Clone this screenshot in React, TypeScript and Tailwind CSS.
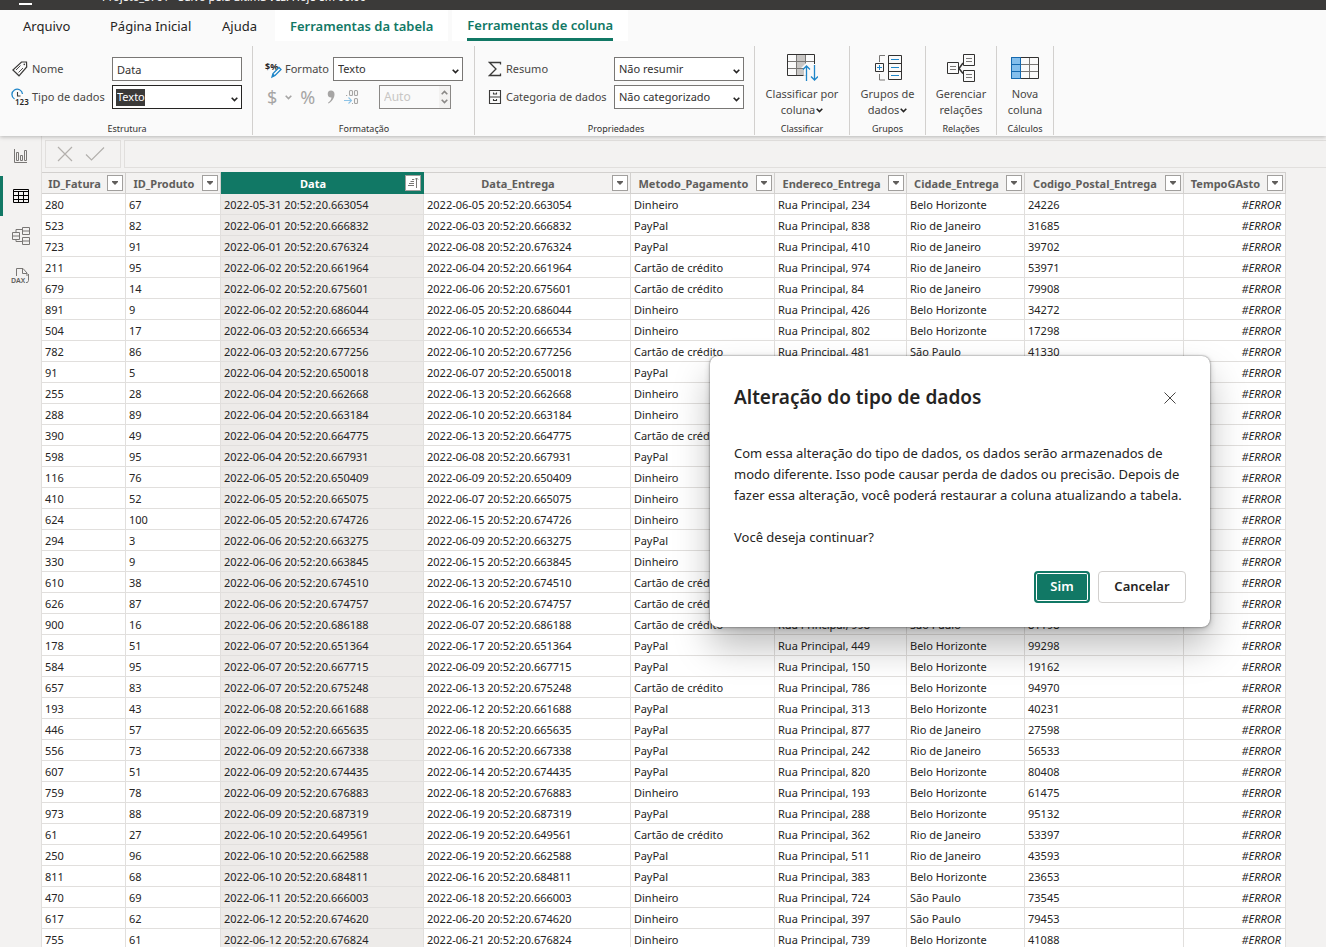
import { useState } from 'react';
import type { ReactNode } from 'react';

type Row = string[];

const columns = [
  { name: 'ID_Fatura', width: 'w-[84px]' },
  { name: 'ID_Produto', width: 'w-[95px]' },
  { name: 'Data', width: 'w-[203px]' },
  { name: 'Data_Entrega', width: 'w-[207px]' },
  { name: 'Metodo_Pagamento', width: 'w-[144px]' },
  { name: 'Endereco_Entrega', width: 'w-[132px]' },
  { name: 'Cidade_Entrega', width: 'w-[118px]' },
  { name: 'Codigo_Postal_Entrega', width: 'w-[159px]' },
  { name: 'TempoGAsto', width: 'w-[102px]' },
];

const BH = 'Belo Horizonte';
const RJ = 'Rio de Janeiro';
const SP = 'São Paulo';
const CC = 'Cartão de crédito';

// id, product, order day, delivery day, time fraction, payment, street number, city, zip
const rows: Row[] = [
  ['280', '67', '05-31', '06-05', '663054', 'Dinheiro', '234', BH, '24226'],
  ['523', '82', '06-01', '06-03', '666832', 'PayPal', '838', RJ, '31685'],
  ['723', '91', '06-01', '06-08', '676324', 'PayPal', '410', RJ, '39702'],
  ['211', '95', '06-02', '06-04', '661964', CC, '974', RJ, '53971'],
  ['679', '14', '06-02', '06-06', '675601', CC, '84', RJ, '79908'],
  ['891', '9', '06-02', '06-05', '686044', 'Dinheiro', '426', BH, '34272'],
  ['504', '17', '06-03', '06-10', '666534', 'Dinheiro', '802', BH, '17298'],
  ['782', '86', '06-03', '06-10', '677256', CC, '481', SP, '41330'],
  ['91', '5', '06-04', '06-07', '650018', 'PayPal'],
  ['255', '28', '06-04', '06-13', '662668', 'Dinheiro'],
  ['288', '89', '06-04', '06-10', '663184', 'Dinheiro'],
  ['390', '49', '06-04', '06-13', '664775', CC],
  ['598', '95', '06-04', '06-08', '667931', 'PayPal'],
  ['116', '76', '06-05', '06-09', '650409', 'Dinheiro'],
  ['410', '52', '06-05', '06-07', '665075', 'Dinheiro'],
  ['624', '100', '06-05', '06-15', '674726', 'Dinheiro'],
  ['294', '3', '06-06', '06-09', '663275', 'PayPal'],
  ['330', '9', '06-06', '06-15', '663845', 'Dinheiro'],
  ['610', '38', '06-06', '06-13', '674510', CC],
  ['626', '87', '06-06', '06-16', '674757', CC],
  ['900', '16', '06-06', '06-07', '686188', CC, '998', SP, '81198'],
  ['178', '51', '06-07', '06-17', '651364', 'PayPal', '449', BH, '99298'],
  ['584', '95', '06-07', '06-09', '667715', 'PayPal', '150', BH, '19162'],
  ['657', '83', '06-07', '06-13', '675248', CC, '786', BH, '94970'],
  ['193', '43', '06-08', '06-12', '661688', 'PayPal', '313', BH, '40231'],
  ['446', '57', '06-09', '06-18', '665635', 'PayPal', '877', RJ, '27598'],
  ['556', '73', '06-09', '06-16', '667338', 'PayPal', '242', RJ, '56533'],
  ['607', '51', '06-09', '06-14', '674435', 'PayPal', '820', BH, '80408'],
  ['759', '78', '06-09', '06-18', '676883', 'Dinheiro', '193', BH, '61475'],
  ['973', '88', '06-09', '06-19', '687319', 'PayPal', '288', BH, '95132'],
  ['61', '27', '06-10', '06-19', '649561', CC, '362', RJ, '53397'],
  ['250', '96', '06-10', '06-19', '662588', 'PayPal', '511', RJ, '43593'],
  ['811', '68', '06-10', '06-16', '684811', 'PayPal', '383', BH, '23653'],
  ['470', '69', '06-11', '06-18', '666003', 'Dinheiro', '724', SP, '73545'],
  ['617', '62', '06-12', '06-20', '674620', 'Dinheiro', '397', SP, '79453'],
  ['755', '61', '06-12', '06-21', '676824', 'Dinheiro', '739', BH, '41088'],
];

const toCells = ([id, product, day, delivery, fraction, payment, street, city, zip]: Row) => [
  id,
  product,
  `2022-${day} 20:52:20.${fraction}`,
  `2022-${delivery} 20:52:20.${fraction}`,
  payment,
  street ? `Rua Principal, ${street}` : '',
  city,
  zip,
];

/* ---------- Icons ---------- */

const Chevron = ({ className = '' }: { className?: string }) => (
  <svg className={className} width="7" height="5" viewBox="0 0 7 5" fill="none" stroke="currentColor" strokeWidth="1.6">
    <path d="M.7.8 3.5 3.6 6.3.8" />
  </svg>
);

const TagIcon = () => (
  <svg width="16" height="16" viewBox="0 0 16 16" fill="none" stroke="#3b3a39" strokeWidth="1.2">
    <path d="M9.5 1H14.5l.2 5L7 14.8.9 9Z" />
    <path d="m4 9 4.500-4.500M6.500 11.500 11 7" strokeWidth=".9" />
    <circle cx="12.3" cy="3.4" r=".8" fill="#3b3a39" stroke="none" />
  </svg>
);

const DataTypeIcon = () => (
  <svg width="16" height="17" viewBox="0 0 16 17" fill="none" className="overflow-visible">
    <path d="M2.500 10A5.300 5.300 0 1 1 10.500 5" stroke="#1f86c9" strokeWidth="1.3" />
    <path d="M5.500 3v4h3" stroke="#3b3a39" strokeWidth="1.1" />
    <text x="3" y="16" fontSize="8" fontWeight="600" fill="#252423">123</text>
  </svg>
);

const FormatIcon = () => (
  <svg width="16" height="17" viewBox="0 0 16 17" fill="none" className="overflow-visible">
    <text x="0" y="9" fontSize="9" fontWeight="700" fill="#252423">$%</text>
    <path d="m7 16 1-3.500 6-6 2 2-6 6Z" fill="#fff" stroke="#1f86c9" strokeWidth="1.3" />
    <path d="m7 16 1-3.500 2.300 2Z" fill="#1f86c9" />
  </svg>
);

const SigmaIcon = () => (
  <svg width="14" height="16" viewBox="0 0 14 16" fill="none" stroke="#3b3a39" strokeWidth="1.3">
    <path d="M12.500 3.500V1.500H1.500L8 8l-6.500 6.500h11v-2" />
  </svg>
);

const CabinetIcon = () => (
  <svg width="14" height="16" viewBox="0 0 14 16" fill="none" stroke="#3b3a39" strokeWidth="1.1">
    <path d="M1.500 1.500h11v13h-11zM1.500 8h11" />
    <path d="M5.500 3.500V5h3V3.500M5.500 10v1.500h3V10" />
  </svg>
);

const DecimalIcon = () => (
  <svg width="17" height="17" viewBox="0 0 17 17" fill="none" stroke="#a6a5a4" strokeWidth="1.1">
    <rect x="6.500" y="1.500" width="3" height="5" rx="1" />
    <rect x="11.500" y="1.500" width="3" height="5" rx="1" />
    <rect x="11.500" y="9.500" width="3" height="5" rx="1" />
    <path d="M3 6.500h1.200M9 14.500h1" />
    <path d="M1 11.500h7M5.500 8.500l3 3-3 3" stroke="#8dc3e6" />
  </svg>
);

const SortColumnIcon = () => (
  <svg width="32" height="30" viewBox="0 0 32 30" fill="none">
    <path d="M11 1.500h9v21h-9z" fill="#c8c6c4" />
    <path d="M2 8.500h27M2 15.500h16M10.500 2v20M19.500 2v9" stroke="#797775" />
    <path d="M28.500 11V1.500h-27v21h16" stroke="#323130" />
    <path d="m15 15 5-5v12h-2v-7Z" fill="#fafafa" />
    <path d="M20.500 28V13M17 16.500l3.500-3.500 3.500 3.500M28.500 12v15M25 23.500l3.500 3.500 3.500-3.500" stroke="#1f86c9" strokeWidth="1.3" />
  </svg>
);

const GroupsIcon = () => (
  <svg width="30" height="28" viewBox="0 0 30 28" fill="none">
    <path d="M12 1.500H6.500V8M6.500 20v6H12" stroke="#797775" />
    <path d="M2.500 9.500h8v8h-8zM15.500 1.500h13v24h-13zM15.500 9.500h13M15.500 17.500h13" stroke="#323130" />
    <path d="M4 13.500h5M6.500 11v5M18 5.500h8M18 13.500h8M18 21.500h8" stroke="#1f86c9" />
  </svg>
);

const RelationsIcon = () => (
  <svg width="30" height="30" viewBox="0 0 30 30" fill="none">
    <path d="M13 15.500 17 10M13 15.500l4 5" stroke="#323130" strokeWidth="1.5" />
    <path d="M1.500 9.500h11v11h-11zM17.500 1.500h11v11h-11zM17.500 17.500h11v11h-11z" stroke="#323130" />
    <path d="M4 13.500h6M4 16.500h6M20 5.500h6M20 8.500h6M20 21.500h6M20 24.500h6" stroke="#797775" />
  </svg>
);

const NewColumnIcon = () => (
  <svg width="30" height="24" viewBox="0 0 30 24" fill="none">
    <path d="M11 8.500h17M11 15.500h17M19.500 2v20" stroke="#797775" />
    <path d="M1.500 1.500h27v21h-27z" stroke="#323130" />
    <path d="M1.500 1.500h9v21h-9z" fill="#83beec" stroke="#1469b0" />
    <path d="M2 8.500h8M2 15.500h8" stroke="#1469b0" />
  </svg>
);

const ReportIcon = () => (
  <svg width="16" height="16" viewBox="0 0 16 16" fill="none" stroke="#797775">
    <path d="M1.500 1v13.500H14M3.500 4.500h2v8h-2zM7.500 7.500h2v5h-2zM11.500 2.500h2v10h-2z" />
  </svg>
);

const DataViewIcon = () => (
  <svg width="16" height="16" viewBox="0 0 16 16" fill="none" stroke="#000">
    <path d="M.5 1.500h15v13H.5zM.5 3.500h15M.5 7.500h15M.5 11.500h15M5.500 3.500v11M10.500 3.500v11" />
  </svg>
);

const ModelIcon = () => (
  <svg width="18" height="18" viewBox="0 0 18 18" fill="none" stroke="#797775">
    <path d="M.5 5.500h7v7h-7zM.5 9h7M10.500.5h7v7h-7zM10.500 4h7M10.500 10.500h7v7h-7zM10.500 14h7M4 5.500v-3h6.500M4 12.500v2h6.500" />
  </svg>
);

const DaxIcon = () => (
  <svg width="18" height="18" viewBox="0 0 18 18" fill="none" className="overflow-visible">
    <path d="M4.500 9V1.500h6.500l4 4.500v3M10.500 2v4.500H15" stroke="#797775" />
    <text x="-1" y="16" fontSize="7" fontWeight="600" fill="#605e5c">DAX</text>
    <path d="M14 15.500h1.500l1-2V7" stroke="#797775" />
  </svg>
);

const SortIcon = () => (
  <svg width="14" height="14" viewBox="0 0 14 14" fill="none" stroke="#797775">
    <path d="M6 3.500h2M4.500 5.500H8M3 7.500h5M2 9.500h6" />
    <path d="M10.500 12V2M9 3.500l1.500-1.500L12 3.500" />
  </svg>
);

/* ---------- Ribbon ---------- */

const Group = ({ label, width, children }: { label: string; width: string; children: ReactNode }) => (
  <section className={`flex shrink-0 flex-col justify-between border-r border-[#d2d0ce] ${width}`}>
    {children}
    <h2 className="text-center text-[9px] leading-3 text-[#323130]">{label}</h2>
  </section>
);

const Field = ({ id, label, icon, children }: { id: string; label: string; icon: ReactNode; children: ReactNode }) => (
  <div className="flex h-6 items-center">
    <label htmlFor={id} className="flex min-w-0 flex-1 items-center gap-1 text-[11px] whitespace-nowrap text-[#484644]">
      {icon}
      {label}
    </label>
    {children}
  </div>
);

const Select = ({ id, value, active = false }: { id: string; value: string; active?: boolean }) => (
  <div className="relative h-6 w-[130px] shrink-0 text-[#252423]">
    <select
      id={id}
      defaultValue={value}
      className={`block h-6 w-full appearance-none border pl-1 text-[11px] outline-none ${
        active
          ? 'border-[#252423] bg-white bg-[linear-gradient(#3b3a39,#3b3a39)] bg-[length:29px_17px] bg-[position:3px_3px] bg-no-repeat text-white'
          : 'border-[#797775] bg-white text-[#323130]'
      }`}
    >
      <option>{value}</option>
    </select>
    <Chevron className="pointer-events-none absolute right-1 bottom-[7px]" />
  </div>
);

const BigButton = ({ icon, lines, menu = false }: { icon: ReactNode; lines: [string, string]; menu?: boolean }) => (
  <button className="flex flex-col items-center text-[11px] leading-4 text-[#484644]">
    <span className="flex h-8 items-center">{icon}</span>
    <span className="mt-0.5 whitespace-nowrap">{lines[0]}</span>
    <span className="flex items-center gap-px">
      {lines[1]}
      {menu && <Chevron className="text-[#252423]" />}
    </span>
  </button>
);

const Ribbon = () => (
  <div className="flex shrink-0 overflow-hidden">
    <Group label="Estrutura" width="h-[89px] w-[253px] pl-3 pr-[10px]">
      <div className="flex flex-col gap-1 pt-[11px]">
        <Field id="nome" label="Nome" icon={<TagIcon />}>
          <input
            id="nome"
            defaultValue="Data"
            className="h-6 w-[130px] shrink-0 border border-[#797775] bg-white px-1 text-[11px] text-[#323130]"
          />
        </Field>
        <Field id="tipo" label="Tipo de dados" icon={<DataTypeIcon />}>
          <Select id="tipo" value="Texto" active />
        </Field>
      </div>
    </Group>

    <Group label="Formatação" width="w-[222px] pl-3 pr-[11px]">
      <div className="flex flex-col gap-1 pt-[11px]">
        <Field id="formato" label="Formato" icon={<FormatIcon />}>
          <Select id="formato" value="Texto" />
        </Field>
        <div className="flex h-6 items-center text-[#a6a5a4]">
          <button disabled aria-label="Moeda" className="flex items-center gap-2 pl-0.5 text-lg leading-6">
            $ <Chevron />
          </button>
          <button disabled aria-label="Porcentagem" className="ml-2 text-lg leading-6">%</button>
          <button disabled aria-label="Separador de milhar" className="ml-3 flex">
            <svg width="8" height="14" viewBox="0 0 8 14" fill="currentColor">
              <path d="M4 .5a3.500 3.500 0 0 1 3.500 3.700C7.500 8 5 11.500 1.500 13.500L1 12.800C3.300 11 4.300 9.500 4.500 7.500A3.500 3.500 0 1 1 4 .5Z" />
            </svg>
          </button>
          <button disabled aria-label="Casas decimais" className="ml-2">
            <DecimalIcon />
          </button>
          <div className="relative ml-auto mr-3 flex h-6 w-[72px] border border-[#8a8886] bg-[#fafafa]">
            <input aria-label="Número de casas decimais" disabled defaultValue="Auto" className="w-12 pl-1 text-xs text-[#c8c6c4]" />
            <span className="ml-auto flex flex-col items-center justify-between bg-[#f3f2f1] px-0.5 py-1 text-[#8a8886]">
              <Chevron className="rotate-180" />
              <Chevron />
            </span>
          </div>
        </div>
      </div>
    </Group>

    <Group label="Propriedades" width="w-[280px] pl-[13px] pr-[10px]">
      <div className="flex flex-col gap-1 pt-[11px]">
        <Field id="resumo" label="Resumo" icon={<SigmaIcon />}>
          <Select id="resumo" value="Não resumir" />
        </Field>
        <Field id="categoria" label="Categoria de dados" icon={<CabinetIcon />}>
          <Select id="categoria" value="Não categorizado" />
        </Field>
      </div>
    </Group>

    <Group label="Classificar" width="w-[95px] pt-1.5">
      <BigButton icon={<SortColumnIcon />} lines={['Classificar por', 'coluna']} menu />
    </Group>
    <Group label="Grupos" width="w-[76px] pt-1.5">
      <BigButton icon={<GroupsIcon />} lines={['Grupos de', 'dados']} menu />
    </Group>
    <Group label="Relações" width="w-[71px] pt-1.5">
      <BigButton icon={<RelationsIcon />} lines={['Gerenciar', 'relações']} />
    </Group>
    <Group label="Cálculos" width="w-[57px] pt-1.5">
      <BigButton icon={<NewColumnIcon />} lines={['Nova', 'coluna']} />
    </Group>
  </div>
);

const Header = () => (
  <header className="relative z-10 shrink-0 bg-[#fafafa] shadow-[0_1px_4px_rgba(0,0,0,0.25)]">
    <div className="flex h-2.5 items-end overflow-hidden bg-[#3b3a39] pb-[5px] pl-[19px] text-[11px] leading-4 text-white">
      <span className="h-4 w-[13px] border-b-2 border-white" />
      <span className="ml-[70px] whitespace-nowrap">Projeto_S701 - Salvo pela última vez: Hoje em 00:00</span>
    </div>
    <nav className="flex h-[31px] text-[13px] text-[#252423]">
      <a href="#arquivo" className="flex w-[88px] items-center pt-0.5 pl-[23px]">Arquivo</a>
      <a href="#inicio" className="ml-[22px] flex w-[112px] items-center pt-0.5 whitespace-nowrap">Página Inicial</a>
      <a href="#ajuda" className="flex w-[53px] items-center pt-0.5">Ajuda</a>
      <a href="#tabela" className="flex items-center bg-white px-[15px] pt-0.5 font-semibold whitespace-nowrap text-[#117865]">
        Ferramentas da tabela
      </a>
      <a href="#coluna" className="ml-1 flex bg-white px-[15px] font-semibold whitespace-nowrap text-[#117865]">
        <span className="flex items-center border-b-3 border-[#117865] pt-1">Ferramentas de coluna</span>
      </a>
    </nav>
    <div className="pt-[5px] pb-px">
      <Ribbon />
    </div>
  </header>
);

/* ---------- Side bar and grid ---------- */

const views = [
  { label: 'Relatório', icon: <ReportIcon /> },
  { label: 'Dados', icon: <DataViewIcon />, active: true },
  { label: 'Modelo', icon: <ModelIcon /> },
  { label: 'DAX', icon: <DaxIcon /> },
];

const SideBar = () => (
  <nav className="flex w-[42px] shrink-0 flex-col border-r border-[#e1dfdd]">
    {views.map((view) => (
      <button
        key={view.label}
        aria-label={view.label}
        className={`flex h-10 items-center justify-center border-l-3 pr-0.5 ${
          view.active ? 'border-[#117865]' : 'border-transparent'
        }`}
      >
        {view.icon}
      </button>
    ))}
  </nav>
);

const FormulaBar = () => (
  <div className="flex h-9 shrink-0 gap-[3px] py-1 pl-[3px]">
    <div className="flex w-[76px] items-center gap-3 border border-[#e1dfdd] pl-[11px] text-[#b3b0ad]">
      <button aria-label="Cancelar fórmula">
        <svg width="16" height="16" viewBox="0 0 16 16" fill="none" stroke="currentColor" strokeWidth="1.2">
          <path d="m1 1 14 14M15 1 1 15" />
        </svg>
      </button>
      <button aria-label="Confirmar fórmula">
        <svg width="20" height="16" viewBox="0 0 20 16" fill="none" stroke="currentColor" strokeWidth="1.2">
          <path d="m1 8.500 5.500 5.500L19 1.500" />
        </svg>
      </button>
    </div>
    <input aria-label="Fórmula" className="min-w-0 flex-1 border border-r-0 border-[#e1dfdd]" />
  </div>
);

const Grid = () => (
  <table className="w-[1244px] table-fixed border-separate border-spacing-0 text-[#252423]">
    <thead>
      <tr>
        {columns.map(({ name, width }) => {
          const selected = name === 'Data';
          return (
            <th
              key={name}
              className={`h-[22px] border-t border-r border-b p-0 ${width} ${
                selected ? 'border-[#117865] bg-[#117865] text-white' : 'border-[#d2d0ce] bg-[#f3f2f1] text-[#605e5c]'
              }`}
            >
              <div className="flex items-center pr-0.5">
                <span className="min-w-0 flex-1 pt-0.5 text-center text-[11px] leading-[18px] font-bold whitespace-nowrap">
                  {name}
                </span>
                <button
                  aria-label={`Filtrar ${name}`}
                  className="flex size-4 shrink-0 items-center justify-center border border-[#a19f9d] bg-white"
                >
                  {selected ? (
                    <SortIcon />
                  ) : (
                    <svg width="6" height="4" viewBox="0 0 6 4" fill="#605e5c">
                      <path d="M0 0h6v1L3 4 0 1Z" />
                    </svg>
                  )}
                </button>
              </div>
            </th>
          );
        })}
      </tr>
    </thead>
    <tbody className="text-[11px] leading-[18px]">
      {rows.map((row) => (
        <tr key={row[0]}>
          {toCells(row).map((cell, index) => (
            <td
              key={index}
              className={`h-[21px] overflow-hidden border-r border-b border-[#e1dfdd] pt-0.5 pr-0 pb-0 pl-[3px] whitespace-nowrap ${
                index === 2 ? 'bg-[#edebe9]' : 'bg-white'
              }`}
            >
              {cell}
            </td>
          ))}
          <td className="h-[21px] border-r border-b border-[#e1dfdd] bg-white pt-0.5 pr-1 pb-0 pl-0 text-right italic">
            #ERROR
          </td>
        </tr>
      ))}
    </tbody>
  </table>
);

/* ---------- Dialog ---------- */

const TypeChangeDialog = ({ onClose }: { onClose: () => void }) => (
  <div
    role="dialog"
    aria-labelledby="dialog-title"
    className="absolute top-[356px] right-[116px] z-20 w-[500px] rounded-lg bg-white p-6 text-[#252423] shadow-[0_0_2px_rgba(0,0,0,0.6),0_2px_6px_rgba(0,0,0,0.2),0_20px_36px_rgba(0,0,0,0.26)]"
  >
    <div className="flex h-9 items-center justify-between">
      <h1 id="dialog-title" className="pb-0.5 text-[19px] leading-8 font-semibold">
        Alteração do tipo de dados
      </h1>
      <button aria-label="Fechar" onClick={onClose} className="flex size-8 items-center justify-center">
        <svg width="12" height="12" viewBox="0 0 12 12" fill="none" stroke="#484644">
          <path d="m.5.5 11 11M11.500.5l-11 11" />
        </svg>
      </button>
    </div>
    <div className="mt-[27px] text-[13px] leading-[21px]">
      <p>
        Com essa alteração do tipo de dados, os dados serão armazenados de
        <br />
        modo diferente. Isso pode causar perda de dados ou precisão. Depois de
        <br />
        fazer essa alteração, você poderá restaurar a coluna atualizando a tabela.
      </p>
      <p className="mt-[21px]">Você deseja continuar?</p>
    </div>
    <div className="mt-[23px] flex justify-end gap-2 text-[13px] font-semibold">
      <button
        onClick={onClose}
        className="h-8 w-14 rounded border-2 border-[#117865] bg-[#117865] text-white inset-ring inset-ring-white"
      >
        Sim
      </button>
      <button onClick={onClose} className="h-8 w-[88px] rounded border border-[#d2d0ce] bg-white">
        Cancelar
      </button>
    </div>
  </div>
);

export default function App() {
  const [dialogOpen, setDialogOpen] = useState(true);

  return (
    <div className="relative flex h-screen flex-col overflow-hidden bg-[#f3f2f1] font-['Noto_Sans','Open_Sans',sans-serif]">
      <Header />
      <main className="flex min-h-0 flex-1">
        <SideBar />
        <div className="flex min-w-0 flex-1 flex-col overflow-hidden">
          <FormulaBar />
          <Grid />
        </div>
      </main>
      {dialogOpen && <TypeChangeDialog onClose={() => setDialogOpen(false)} />}
    </div>
  );
}
